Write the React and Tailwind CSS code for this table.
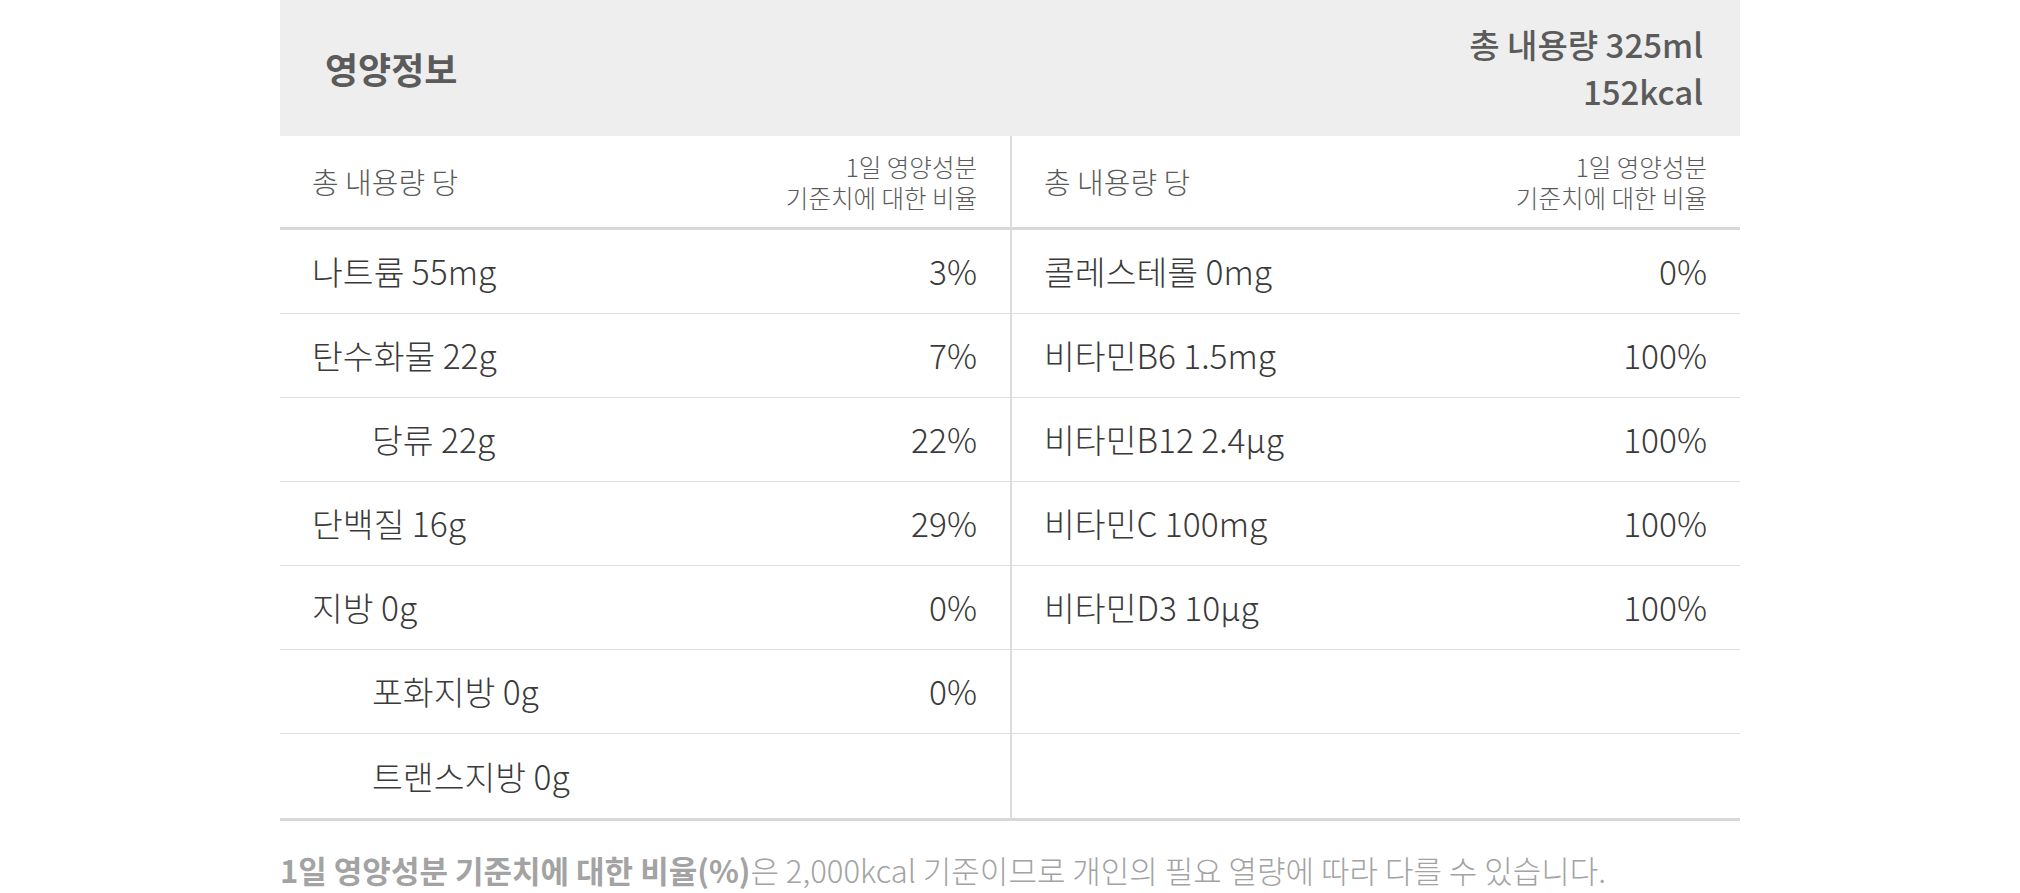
import React from 'react';

const leftRows = [
    { name: '나트륨 55mg', pct: '3%' },
    { name: '탄수화물 22g', pct: '7%' },
    { name: '당류 22g', pct: '22%', sub: true },
    { name: '단백질 16g', pct: '29%' },
    { name: '지방 0g', pct: '0%' },
    { name: '포화지방 0g', pct: '0%', sub: true },
    { name: '트랜스지방 0g', pct: '', sub: true },
];

const rightRows = [
    { name: '콜레스테롤 0mg', pct: '0%' },
    { name: '비타민B6 1.5mg', pct: '100%' },
    { name: '비타민B12 2.4μg', pct: '100%' },
    { name: '비타민C 100mg', pct: '100%' },
    { name: '비타민D3 10μg', pct: '100%' },
    { name: '', pct: '' },
    { name: '', pct: '' },
];

const Column = ({ rows, right }) => (
    <div className={right ? 'flex flex-col border-l-2 border-[#dcdcdc]' : 'flex flex-col'}>
        {/* column head */}
        <div className="h-[94px] flex items-center justify-between pl-8 pr-[33px] border-b-[3px] border-[#d8d8d8]">
            <span className="text-[29px] font-light text-[#5a5a5a]">총 내용량 당</span>
            <span className="text-[24.5px] leading-[31px] font-light text-[#5a5a5a] text-right">
                1일 영양성분
                <br />
                기준치에 대한 비율
            </span>
        </div>
        {rows.map((r, i) => (
            <div
                key={i}
                className={
                    i === rows.length - 1
                        ? 'h-[84px] flex items-center justify-between pl-8 pr-[33px]'
                        : 'h-[84px] flex items-center justify-between pl-8 pr-[33px] border-b border-[#dedede]'
                }
            >
                <span className={r.sub ? 'pl-[60px] text-[33.5px] font-light text-[#3a3a3a]' : 'text-[33.5px] font-light text-[#3a3a3a]'}>
                    {r.name}
                </span>
                <span className="text-[33.5px] font-light text-[#3a3a3a]">{r.pct}</span>
            </div>
        ))}
    </div>
);

const App = () => {
    return (
        <div className="min-h-screen bg-white font-['Noto_Sans_CJK_KR','Noto_Sans',sans-serif]">
            <div className="w-[1460px] mx-auto">
                {/* Title bar */}
                <div className="h-[136px] bg-[#eeeeee] flex items-center justify-between pl-[45px] pr-[37px]">
                    <h2 className="text-[36px] font-bold text-[#5b5b5b]">영양정보</h2>
                    <div className="text-[33px] leading-[47px] font-medium text-[#5b5b5b] text-right">
                        <p>총 내용량 325ml</p>
                        <p>152kcal</p>
                    </div>
                </div>

                {/* Table */}
                <div className="grid grid-cols-2 border-b-[3px] border-[#d8d8d8]">
                    <Column rows={leftRows} />
                    <Column rows={rightRows} right />
                </div>

                <p className="mt-[28px] text-[31px] leading-[42px] font-light text-[#a3a3a3]">
                    <span className="font-bold">1일 영양성분 기준치에 대한 비율(%)</span>은 2,000kcal 기준이므로 개인의 필요 열량에 따라 다를 수 있습니다.
                </p>
            </div>
        </div>
    );
};

export default App;
